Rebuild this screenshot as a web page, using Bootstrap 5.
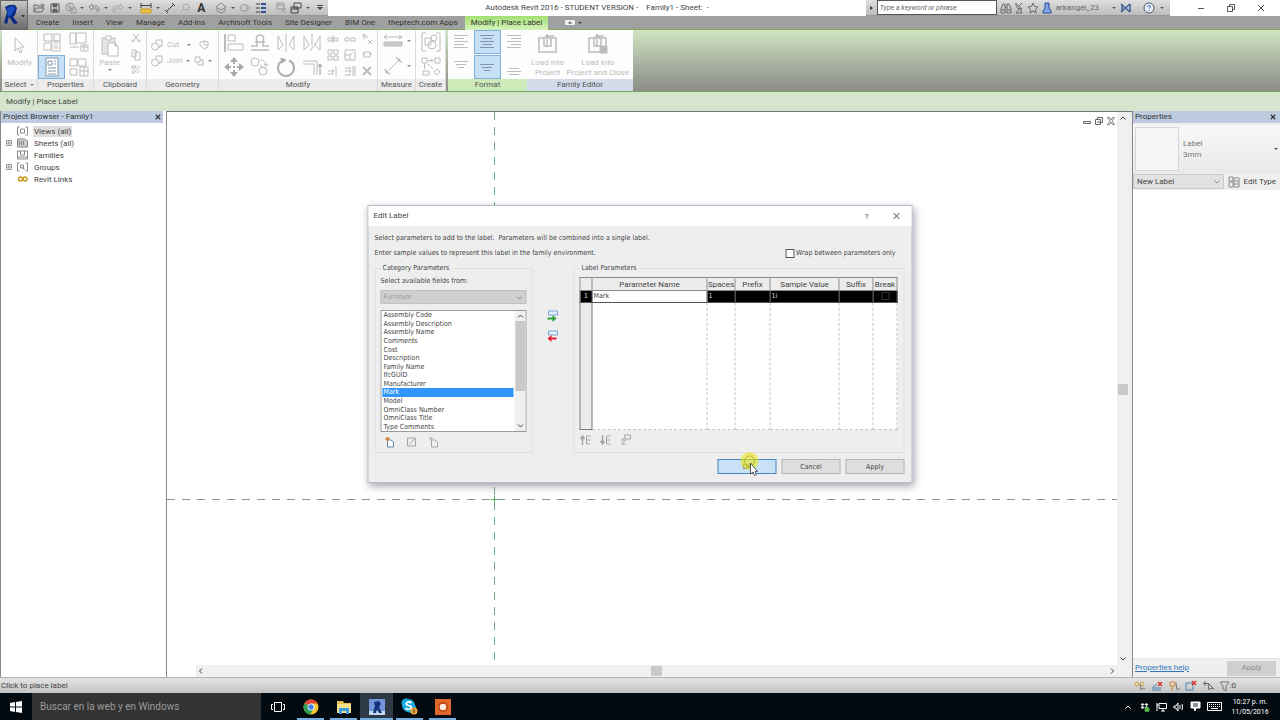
<!DOCTYPE html>
<html lang="en">
<head>
<meta charset="utf-8">
<meta name="viewport" content="width=device-width, initial-scale=1">
<title>Autodesk Revit 2016 - Family1</title>
<link rel="stylesheet" href="https://cdn.jsdelivr.net/npm/bootstrap@5.3.0/dist/css/bootstrap.min.css">
<style>
:root { --ui: Roboto, "Liberation Sans", sans-serif; --dlg: "DejaVu Sans Condensed", "DejaVu Sans", sans-serif; }
body { font: 8px/12px var(--ui); color: #444; background: #fff; overflow: hidden; }
button, input, select { font: inherit; color: inherit; }
button { background: none; border: 0; padding: 0; }
svg { display: block; }
svg:not([fill]) { fill: none; }
svg:not([stroke]) { stroke: currentColor; }
a { color: inherit; text-decoration: none; }

/* title bar */
.app-btn { width: 28px; background: linear-gradient(#c8c8c8, #8a8a8a 60%, #6e6e6e); border: 1px solid #666; }
.titlebar { height: 16px; }
.qat { background: linear-gradient(#dedede, #bdbdbd); border-bottom: 1px solid #999; padding-left: 3px; width: 300px; color: #666; }
.qat button { width: 16px; display: grid; place-items: center; }
.qat .caret, .infobar .caret { width: 8px; }
.qat .txt { font-size: 12px; font-weight: 700; color: #333; }
.caret::after { content: ""; display: block; width: 0; margin: auto; border: 2px solid transparent; border-top-color: #555; border-bottom: 0; }
.sep { width: 4px; }
.infobar { background: linear-gradient(#dedede, #bdbdbd); width: 304px; border-bottom: 1px solid #999; color: #666; }
.infobar input { width: 120px; height: 15px; border: 1px solid #555; background: #fff; font-size: 7px; font-style: italic; padding: 0 2px; border-radius: 0; }
.infobar input::placeholder { color: #666; opacity: 1; }
.winctl button { width: 30px; display: grid; place-items: center; color: #555; }

/* tabs */
.tabs { height: 14px; background: #a0a0a0; color: #333; border-bottom: 1px solid #82a860; padding-left: 2px; gap: 1px; }
.tabs a { padding: 0 6px; line-height: 14px; }
.tabs a.on { background: linear-gradient(#a2e070, #d5f3bd); height: 14px; }

/* ribbon */
.ribbon { height: 62px; background: linear-gradient(#cfe6c1, #a9b1a1 55%, #8b8d87); border-bottom: 1px solid #7f9f7a; color: #bcbcbc; padding: 0 1px 0 2px; }
.ribbon .caret::after { border-top-color: #888; }
.pnl { background: #fdfdfd; border-right: 1px solid #dadada; display: flex; flex-direction: column; }
.pnl > footer { height: 12px; background: #ececec; color: #555; text-align: center; white-space: nowrap; }
.pnl .tools { flex: 1; }
.pnl button { display: grid; place-items: center; color: inherit; }
.pnl .on { background: #c6e0f7; outline: 1px solid #7fb0dc; color: #8296a8; }
.tl { line-height: 10px; white-space: nowrap; }
.g2 { display: grid; align-content: space-around; justify-items: center; }
.sel { width: 36px; } .prp { width: 56px; } .clp { width: 53px; }
.geo { width: 72px; } .mod { width: 159px; } .mea { width: 38px; } .cre { width: 30px; }
.fmt { width: 79px; margin-left: 2px; border: 0; } .fam { width: 106px; border: 0; }
.fmt > footer { background: #cdeab9; } .fam > footer { background: #d3dbea; }
.fmt .g2 { grid-template-columns: repeat(3, 1fr); }
.prp .g2 { grid-template-columns: 1fr 1fr; }
.fmt .g2 button, .prp .g2 button { width: 25px; height: 22px; }
.mod .lg { display: grid; gap: 4px; grid-template-columns: repeat(4, 22px); }
.mod .sm { display: grid; gap: 4px; grid-template-columns: repeat(3, 13px); }

.optbar { height: 19px; background: #d6e5ce; padding: 4px 6px; border-top: 1px solid #c7ecae; }

/* docked panes */
.pane-h { height: 12px; background: #bccbdd; color: #333; padding: 0 2px; }
.browser { width: 167px; border: 1px solid #888; border-width: 0 1px 0 1px; }
.browser .pane-h { margin-right: 3px; }
.tree { padding: 2px 4px; }
.tree li { display: flex; align-items: center; height: 12px; }
.tree .tw { width: 11px; color: #999; }
.tree .ic { width: 13px; color: #888; }
.tree span.hl { background: #dedede; }
.tree span { padding: 0 1px; line-height: 11px; }
.canvas { border-top: 1px solid #777; background: #fff; }
.canvas .draw { position: absolute; inset: 0; }
.sb { background: #f0f0f0; color: #444; }
.sb i { display: block; background: #c9c9c9; }
.vsb { width: 12px; padding: 1px 0 14px; }
.hsb { height: 12px; margin-left: 29px; }
.mdi { position: absolute; right: 2px; top: 5px; gap: 4px; color: #666; }
.edge { width: 3px; background: #eee; }
.props { width: 148px; border-left: 1px solid #888; background: #fff; }
.typebox { height: 50px; background: linear-gradient(#f8f8f8, #e9e9e9); border-top: 2px solid #f0f0f0; padding: 2px; color: #777; line-height: 11px; }
.typebox .thumb { width: 44px; height: 44px; border: 1px solid #d6d6d6; background: #f5f5f5; }
.newlabel { width: 91px; height: 15px; border: 1px solid #c8c8c8; background: #e2e2e2; border-radius: 0; appearance: none; padding: 0 3px; }
.typerow { background: #efefef; height: 17px; }
.p-foot { background: #efefef; height: 19px; border-top: 1px solid #e6e6e6; padding: 0 4px 0 2px; }
.p-foot a { color: #2f77c0; text-decoration: underline; }
.p-foot button { width: 49px; height: 15px; background: #cfcfcf; color: #8e8e8e; }

.status { height: 16px; background: linear-gradient(#e4e4e4, #c3c3c3); border-top: 1px solid #b4b4b4; padding: 0 44px 0 1px; }

/* taskbar */
.task { height: 27px; background: #030a10; color: #fff; }
.task .start { width: 32px; display: grid; place-items: center; }
.task .find { width: 229px; background: #333; border: 0; border-radius: 0; padding: 0 8px; font-size: 10px; }
.task .find::placeholder { color: #9a9a9a; opacity: 1; }
.task .app { width: 33px; display: grid; place-items: center; padding: 0 3px; }
.task .app.run { background: linear-gradient(#76aee2, #76aee2) bottom / 27px 2px no-repeat; }
.task .app.cur { background: linear-gradient(#76aee2, #76aee2) bottom / 100% 2px no-repeat #2d3a45; }
.clock { font-size: 7px; line-height: 10px; width: 44px; text-align: center; margin-right: 8px; }
.tray { gap: 6px; }

/* dialog */
.dlg { position: absolute; top: 205px; left: 50%; transform: translateX(-50%); width: 545px; background: #eee; border: 1px solid #b9b9cc; box-shadow: 1px 3px 8px rgba(0,0,40,.38); font-family: var(--dlg); font-size: 7px; color: #444; }
.dlg header { height: 20px; background: #fff; font: 8px/19px var(--ui); padding: 0 11px 0 5px; }
.dlg main { padding: 6px 7px 8px 6px; }
.line2 { margin-top: 3px; padding-right: 9px; }
.line2 label { gap: 2px; }
.grp { border: 1px solid #e0e0e0; border-radius: 0; padding: 0 5px; margin: 0; }
.grp legend { float: none; width: auto; font-size: 7px; line-height: 10px; padding: 0 2px; margin: 0; }
.cat { width: 158px; }
.cat label { margin-top: 2px; }
.cat .drop { margin-top: 3px; }
.lab { width: 331px; padding-top: 2px; }
.lab legend { margin-bottom: -2px; }
.chk { width: 9px; height: 9px; appearance: none; border: 1px solid #555; background: #fff; margin: 0; border-radius: 0; }
.furn { width: 146px; height: 14px; background: #d0d0d0; border: 1px solid #c2c2c2; color: #999; border-radius: 0; appearance: none; padding: 0 2px; opacity: 1; }
.drop { position: relative; }
.drop svg { position: absolute; right: 3px; top: 4px; pointer-events: none; color: #888; }
.fields { height: 122px; width: 146px; border: 1px solid #999; background: #fff; overflow: hidden; margin-top: 6px; }
.fields .rows { display: flex; flex-direction: column; padding: 0 1px; }
.fields .rows li { flex: 1 1 0; min-height: 0; display: flex; align-items: center; padding: 0 1px; line-height: 8px; }
.fields li.on { background: #3096fa; color: #fff; }
.fields .sb { width: 11px; }
.fields .sb i { width: 10px; height: 70px; }
.params { border-collapse: collapse; width: 317px; table-layout: fixed; background: #fff; height: 153px; line-height: 10px; }
.params th { font: 8px/11px var(--ui); background: #ececec; border: 1px solid #8b8b8b; text-align: center; height: 13px; padding: 0; white-space: nowrap; }
.params td { padding: 0 1px; border: 1px dashed #c4c4c4; vertical-align: top; white-space: nowrap; }
.params tr.cur td { background: #000; color: #ddd; height: 12px; border-color: #555; border-style: solid; }
.params tr.cur td.edit { background: #fff; color: #444; }
.params td.rowh { background: #ececec; border: 1px solid #777; }
.params tr.cur td.rowh { background: #000; text-align: center; padding: 0; }
.params .brk { border-color: #333; background: #000; width: 8px; height: 8px; display: block; margin: 1px auto; }
.movers { padding-top: 47px; margin-left: -2px; }
.ftr { gap: 5px; margin-top: 6px; }
.ftr button { width: 59px; height: 15px; background: #dedede; border: 1px solid #b5b5b5; line-height: 12px; }
.ftr button.ok { background: #c9e1f6; border-color: #4a86c0; }
.ic-row { gap: 8px; color: #a5a5a5; }
.cat .ic-row { gap: 12px; }
.ptr { position: absolute; left: 20px; top: -10px; width: 24px; height: 30px; pointer-events: none; }
</style>
</head>
<body class="vh-100 d-flex flex-column">

<svg width="0" height="0" class="position-absolute" aria-hidden="true">
  <symbol id="chev-d" viewBox="0 0 8 8"><path d="M1.500 2.500 4 5l2.500-2.500" /></symbol>
  <symbol id="chev-u" viewBox="0 0 8 8"><path d="M1.500 5.500 4 3l2.500 2.500" /></symbol>
  <symbol id="x" viewBox="0 0 8 8"><path d="m1 1 6 6M7 1 1 7" /></symbol>
  <symbol id="joinc" viewBox="0 0 12 12"><circle cx="4" cy="7.500" r="3.500"/><path d="M5 4V1h6v6H8M8 9l3-3" /></symbol>
  <symbol id="big" viewBox="0 0 20 20"><path d="M2 2h8v7H2zM12 2h6v7h-6zM2 11h7v7H2zM10 9h8v10h-8zM12 11h4M12 14h4M12 16h4" /></symbol>
</svg>

<div class="d-flex">
  <button class="app-btn d-flex align-items-center justify-content-center" aria-label="Application menu">
    <svg width="26" height="26" viewBox="0 0 26 26" stroke="none"><path fill="#0b2a80" d="M4 5q5-3 10-2l2 3-2 7-2 2 5 6-4 1-5-7-2 7-3-1 3-11z"/><path fill="#1d4fc4" d="m6 6 6-2 2 3-4 6-3 2z"/><path fill="#333" d="M20 13h4l-2 2.500z"/></svg>
  </button>
  <div class="flex-fill">
    <div class="titlebar d-flex justify-content-between">
      <div class="qat d-flex" role="toolbar" aria-label="Quick access">
        <button aria-label="Open"><svg width="12" height="10" viewBox="0 0 12 10"><path d="M1 9V2h3l1 1h4v2M1 9l2-4h8L9 9zM8 1l3 1-1 2"/></svg></button>
        <button aria-label="Save"><svg width="10" height="10" viewBox="0 0 10 10" stroke="#555"><path d="M1 1h8v8H1z" /><path fill="#666" d="M3 1v3h4V1zM3 9V6h4v3z" stroke-width=".6"/></svg></button>
        <button aria-label="Synchronize"><svg width="12" height="12" viewBox="0 0 12 12" stroke="#999"><circle cx="5" cy="5" r="4"/><path d="M5 1v8M2 3l6 5M6 6h5v5H6z"/></svg></button>
        <button class="caret" aria-label="Sync options"></button>
        <button aria-label="Undo"><svg width="12" height="10" viewBox="0 0 12 10" stroke="#888"><path d="M4 1 1 4l3 3V5h4q2 1 1 4 3-1 2-4-1-2-3-2H4z"/></svg></button>
        <button class="caret" aria-label="Undo list"></button>
        <button aria-label="Redo"><svg width="12" height="10" viewBox="0 0 12 10" stroke="#aaa"><path d="m8 1 3 3-3 3V5H4Q2 6 3 9 0 8 1 5q1-2 3-2h4z"/></svg></button>
        <button class="caret" aria-label="Redo list"></button>
        <span class="sep"></span>
        <button aria-label="Measure"><svg width="12" height="12" viewBox="0 0 12 12"><path d="M1 3.500h10M1 1v5M11 1v5" stroke="#444"/><path d="M1 7h10v4H1z" fill="#f0c040" stroke="#c99a2b"/></svg></button>
        <button class="caret" aria-label="Measure options"></button>
        <button aria-label="Dimension"><svg width="12" height="12" viewBox="0 0 12 12" stroke="#333"><path d="m2 10 8-8M1 8l3 3M8 1l3 3"/></svg></button>
        <button aria-label="Tag"><svg width="12" height="10" viewBox="0 0 12 10" stroke="#aaa"><circle cx="7" cy="4" r="3"/><path d="M5 6 2 9M8 7l3-3"/></svg></button>
        <button aria-label="Text" class="txt">A</button>
        <span class="sep"></span>
        <button aria-label="3D view"><svg width="12" height="12" viewBox="0 0 12 12" stroke="#888"><path d="m1 5 5-4 5 4-5 3zM2 6v3l4 2 4-2V6"/></svg></button>
        <button class="caret" aria-label="3D options"></button>
        <button aria-label="Section"><svg width="12" height="12" viewBox="0 0 12 12" stroke="#999"><circle cx="5" cy="6" r="3.500"/><path d="m8 3 3 3-3 3"/></svg></button>
        <button aria-label="Thin lines"><svg width="12" height="12" viewBox="0 0 12 12" stroke="#2b5597"><path d="M1 2h4M1 6h4M1 10h4" stroke="#444"/><path d="M6 2h5M6 6h5M6 10h5" stroke-width="2"/></svg></button>
        <span class="sep"></span>
        <button aria-label="Close hidden windows"><svg width="12" height="12" viewBox="0 0 12 12" stroke="#999"><path d="M2 1h7v6H2zM2 3h7M6 6l5 5M11 6l-5 5"/></svg></button>
        <button aria-label="Switch windows"><svg width="12" height="12" viewBox="0 0 12 12" stroke="#444"><path d="M4 1h7v5H4zM1 5h7v6H1zM1 7h7"/></svg></button>
        <button class="caret" aria-label="Windows list"></button>
        <button class="ms-auto" aria-label="Customize toolbar"><svg width="6" height="6" viewBox="0 0 6 6" stroke="#444"><path d="M0 .5h6"/><path fill="#444" stroke="none" d="M0 2h6L3 5z"/></svg></button>
      </div>
      <div class="d-flex align-items-center"><span class="me-2">Autodesk Revit 2016 - STUDENT VERSION -</span><span>Family1 - Sheet:&nbsp; -</span></div>
      <div class="d-flex">
        <div class="infobar d-flex align-items-center justify-content-between pe-1">
          <button aria-label="Collapse" class="ps-1"><svg width="4" height="6" viewBox="0 0 4 6" stroke="none" fill="#333"><path d="m0 1 3 2-3 2z"/></svg></button>
          <input type="text" aria-label="Search help" placeholder="Type a keyword or phrase">
          <button aria-label="Search"><svg width="12" height="12" viewBox="0 0 12 12"><path d="M1 11V7l2-5h2v9zM7 11V2h2l2 5v4zM5 5h2M1 8h4M7 8h4"/></svg></button>
          <button aria-label="Communication"><svg width="10" height="12" viewBox="0 0 10 12"><path d="m2 2 6 5M2 1q-1 6 6 6M5 4l3-3M5 7l-3 4h6L6 7"/></svg></button>
          <button aria-label="Favorites"><svg width="12" height="12" viewBox="0 0 12 12"><path d="m6 1 1.500 3.500 3.500.5-2.500 2.500.5 3.500-3-2-3 2 .5-3.500L1 5l3.500-.5z"/></svg></button>
          <button class="d-flex align-items-center"><svg class="me-1" width="10" height="12" viewBox="0 0 10 12" stroke="#2b4a9c" fill="#7fa4e0"><path d="M3 1h4v5l2 3v2H1V9l2-3z"/></svg>arkangel_23</button>
          <button class="caret ms-2" aria-label="Account"></button>
          <button aria-label="Exchange apps"><svg width="12" height="10" viewBox="0 0 12 10" stroke="#3d5e9c" stroke-width="1.500"><path d="m1 1 9 8M10 1 1 9M2 1v8M10 1v8"/></svg></button>
          <button class="ms-2" aria-label="Help"><svg width="12" height="12" viewBox="0 0 12 12" fill="#e6eefb" stroke="#556"><circle cx="6" cy="6" r="5"/><path fill="none" stroke="#2757a8" d="M4.500 4.500q1.500-2 3 0 0 1-1.500 2M6 8v1"/></svg></button>
          <button class="caret" aria-label="Help options"></button>
        </div>
        <div class="winctl d-flex ms-3 me-1">
          <button aria-label="Minimize"><svg width="8" height="8" viewBox="0 0 8 8"><path d="M1 4.500h6"/></svg></button>
          <button aria-label="Restore"><svg width="8" height="8" viewBox="0 0 8 8"><path d="M.5 2.500h5v5h-5zM2.500 2V.5h5v5H6"/></svg></button>
          <button aria-label="Close"><svg width="8" height="8"><use href="#x"/></svg></button>
        </div>
      </div>
    </div>
    <nav class="tabs d-flex" aria-label="Ribbon tabs">
      <a href="#">Create</a><a href="#">Insert</a><a href="#">View</a><a href="#">Manage</a><a href="#">Add-Ins</a><a href="#">Archisoft Tools</a><a href="#">Site Designer</a><a href="#">BIM One</a><a href="#">theptech.com Apps</a><a href="#" class="on">Modify | Place Label</a>
      <button class="ms-3" aria-label="Minimize ribbon"><svg width="18" height="6" viewBox="0 0 18 6" stroke="none"><rect width="10" height="5" rx="1" fill="#eee"/><path fill="#444" d="m3 3.500 2-2 2 2zM13 2h4l-2 2z"/></svg></button>
    </nav>
  </div>
</div>

<div class="ribbon d-flex" role="toolbar" aria-label="Ribbon">
  <section class="pnl sel">
    <div class="tools g2 pb-1"><button><svg width="12" height="20" viewBox="0 0 12 20"><path d="M2 1v13l3-3 2 5 2-1-2-5h4z"/></svg><span>Modify</span></button></div>
    <footer class="d-flex align-items-center justify-content-center gap-1">Select <span class="caret"></span></footer>
  </section>
  <section class="pnl prp">
    <div class="tools g2">
      <button aria-label="Family types"><svg width="20" height="20"><use href="#big"/></svg></button>
      <button aria-label="Family category"><svg width="20" height="20" viewBox="0 0 20 20"><path d="M1 1h6v11H1zM7 1h10v10H7zM1 15h9M12 13h7v6h-7zM12 15h7M15 13v6"/></svg></button>
      <button class="on" aria-label="Properties"><svg width="20" height="20" viewBox="0 0 20 20"><path fill="#fff" d="M4 1h12v18H4z"/><path d="M6 4h4v4H6zM12 4h2M12 7h2M6 11h8M6 14h8M6 17h8"/></svg></button>
      <button aria-label="Type properties"><svg width="20" height="20" viewBox="0 0 20 20"><path d="M1 2h7v7H1zM9 2h8v7H9zM1 12h7v6H1zM11 10h8v9h-8zM11 14h8M15 10v9"/></svg></button>
    </div>
    <footer>Properties</footer>
  </section>
  <section class="pnl clp">
    <div class="tools d-flex justify-content-around align-items-center">
      <button><svg width="20" height="22" viewBox="0 0 20 22"><path fill="#e4e4e4" d="M2 3h13v16H2z"/><path fill="#fff" d="M6 1h5v4H6zM8 8h7l3 3v10H8zM15 8v3h3"/></svg><span>Paste</span><span class="caret pb-1"></span></button>
      <div class="d-grid gap-1">
        <button aria-label="Cut to clipboard"><svg width="10" height="12" viewBox="0 0 10 12"><path d="m2 1 5 6M8 1 3 7"/><circle cx="2" cy="8" r="1"/><circle cx="8" cy="8" r="1"/></svg></button>
        <button aria-label="Copy to clipboard"><svg width="10" height="12" viewBox="0 0 10 12"><path d="M1 1h4v7H1zM4 3h4l1 1v7H4z"/></svg></button>
        <button aria-label="Match type"><svg width="10" height="12" viewBox="0 0 10 12"><path d="M1 1h4v2H1zM9 1 5 6 2 9l-1-2 3-2M6 8l3-2"/></svg></button>
      </div>
    </div>
    <footer>Clipboard</footer>
  </section>
  <section class="pnl geo">
    <div class="tools d-grid align-content-center ps-1 pb-1 gap-1">
      <div class="d-flex align-items-center gap-1"><svg width="12" height="12"><use href="#joinc"/></svg><button>Cut</button><span class="caret ms-1 me-1"></span><button aria-label="Cope"><svg width="10" height="10" viewBox="0 0 10 10"><path d="M1 2 5 1l4 1v5L5 9 1 5zM5 1v4h4"/></svg></button></div>
      <div class="d-flex align-items-center gap-1"><svg width="12" height="12"><use href="#joinc"/></svg><button>Join</button><span class="caret"></span><button aria-label="Split face"><svg width="10" height="10" viewBox="0 0 10 10"><path d="M1 1h5v5H1zM6 4h3v5H4V6"/></svg></button><span class="caret"></span></div>
    </div>
    <footer>Geometry</footer>
  </section>
  <section class="pnl mod">
    <div class="tools d-flex align-items-center px-1 justify-content-between">
      <div class="lg">
        <button aria-label="Align"><svg width="20" height="20" viewBox="0 0 20 20"><path d="M1 1v18" stroke-width="2"/><path d="M4 2h7v6H4zM4 11h15v6H4z"/></svg></button>
        <button aria-label="Offset"><svg width="20" height="20" viewBox="0 0 20 20"><path d="M1 13h6V9Q5 2 10 2t3 7v4h6M1 17h18M5 9h10" stroke-width="1.500"/></svg></button>
        <button aria-label="Mirror pick axis"><svg width="20" height="20" viewBox="0 0 20 20"><path d="M10 1v18M2 3v14l5-5zM18 3v14l-5-5z"/></svg></button>
        <button aria-label="Mirror draw axis"><svg width="20" height="20" viewBox="0 0 20 20"><path d="M10 1v11M2 3v14l5-5zM18 3v14l-5-5zM8 18l6-8"/></svg></button>
        <button aria-label="Move"><svg width="20" height="20" viewBox="0 0 20 20" fill="#aaa" stroke="#aaa"><path stroke="none" d="m10 0 4 5H6zM10 20l4-5H6zM0 10l5 4V6zM20 10l-5 4V6zM9 9h2v2H9z"/><path d="M10 4v3M10 13v3M4 10h3M13 10h3" stroke-width="2"/></svg></button>
        <button aria-label="Copy"><svg width="20" height="20" viewBox="0 0 20 20"><circle cx="5" cy="5" r="4"/><circle cx="13" cy="14" r="4"/><path d="M10 3q6 0 6 5m-2-1 2 2 2-2M10 8l6 4"/></svg></button>
        <button aria-label="Rotate"><svg width="20" height="20" viewBox="0 0 20 20" stroke="#b0b0b0"><path stroke-width="2" d="M13 3.500A8 8 0 1 1 7 3.500"/><path d="m5 1 5 2-4 3z" fill="#aaa"/></svg></button>
        <button aria-label="Trim"><svg width="20" height="20" viewBox="0 0 20 20"><path d="M1 4h14v14M1 7h11v11" /><path d="M18 18V7m-2 3 2-3 2 3" stroke="#999"/></svg></button>
      </div>
      <div class="sm">
        <button aria-label="Split"><svg width="12" height="12" viewBox="0 0 12 12"><path d="M1 5h4v3H1zM7 5h4v3H7zM6 2v8"/></svg></button>
        <button aria-label="Split with gap"><svg width="12" height="12" viewBox="0 0 12 12"><path d="M1 5h4v3H1zM7 5h4v3H7z"/></svg></button>
        <button aria-label="Unpin"><svg width="12" height="12" viewBox="0 0 12 12"><path d="M1 2h4M3 1v5M3 4h4M7 7l4 4M11 7l-4 4"/></svg></button>
        <button aria-label="Array"><svg width="12" height="12" viewBox="0 0 12 12"><path d="M1 1h4v4H1zM7 1h4v4H7zM1 7h4v4H1zM7 7h4v4H7z"/></svg></button>
        <button aria-label="Scale"><svg width="12" height="12" viewBox="0 0 12 12"><path d="M1 1h10v10H1zM1 6h5v5M6 6l3-3"/></svg></button>
        <button aria-label="Pin"><svg width="12" height="12" viewBox="0 0 12 12"><path d="M3 3h6v5H3zM1 5h2M9 5h2"/></svg></button>
        <button aria-label="Trim single"><svg width="12" height="12" viewBox="0 0 12 12"><path d="M1 6h6m-2-2 2 2-2 2M9 1v10M1 9h6"/></svg></button>
        <button aria-label="Trim multiple"><svg width="12" height="12" viewBox="0 0 12 12"><path d="M1 3h6M1 6h6m-2-2 2 2-2 2M9 1v10M11 1v10M1 10h6"/></svg></button>
        <button aria-label="Delete"><svg width="12" height="12" viewBox="0 0 12 12" stroke-width="2"><path d="m2 2 8 8M10 2l-8 8"/></svg></button>
      </div>
    </div>
    <footer>Modify</footer>
  </section>
  <section class="pnl mea">
    <div class="tools d-grid align-content-around justify-content-center">
      <div class="d-flex align-items-center gap-1"><button aria-label="Measure distance"><svg width="20" height="16" viewBox="0 0 20 16"><path d="M1 4h18M4 2 1 4l3 2M16 2l3 2-3 2"/><path d="M1 9h18v4H1z" fill="#ccc"/></svg></button><span class="caret"></span></div>
      <div class="d-flex align-items-center gap-1"><button aria-label="Aligned dimension"><svg width="20" height="20" viewBox="0 0 20 20"><path d="M3 17 17 3M1 13l6 6M13 1l6 6M3 13v4h4M13 3h4v4"/></svg></button><span class="caret"></span></div>
    </div>
    <footer>Measure</footer>
  </section>
  <section class="pnl cre">
    <div class="tools g2">
      <button aria-label="Create group"><svg width="20" height="20" viewBox="0 0 20 20"><path d="M5 1H1v18h4M15 1h4v18h-4"/><path d="M4 6h6v7H4z"/><circle cx="13" cy="6" r="3"/><circle cx="11" cy="13" r="4"/></svg></button>
      <button aria-label="Create similar"><svg width="20" height="20" viewBox="0 0 20 20"><path d="M1 1h5v5H1zM14 1h5v5h-5zM2 14h6v4H2zM16 12l3 3-3 3-3-3zM7 3.500h5m-2-2 2 2-2 2M3.500 7v5M7 7l5 5"/></svg></button>
    </div>
    <footer>Create</footer>
  </section>
  <section class="pnl fmt">
    <div class="tools g2">
      <button aria-label="Left"><svg width="16" height="16" viewBox="0 0 16 16"><path d="M1 1.500h14M1 4.500h10M1 7.500h14M1 10.500h10M1 13.500h14"/></svg></button>
      <button class="on" aria-label="Center"><svg width="16" height="16" viewBox="0 0 16 16"><path d="M1 1.500h14M3 4.500h10M1 7.500h14M3 10.500h10M1 13.500h14"/></svg></button>
      <button aria-label="Right"><svg width="16" height="16" viewBox="0 0 16 16"><path d="M1 1.500h14M5 4.500h10M1 7.500h14M5 10.500h10M1 13.500h14"/></svg></button>
      <button aria-label="Top"><svg width="16" height="16" viewBox="0 0 16 16"><path d="M1 2.500h14M3 5.500h10M5 8.500h6"/></svg></button>
      <button class="on" aria-label="Middle"><svg width="16" height="16" viewBox="0 0 16 16"><path d="M1 5.500h14M3 8.500h10M5 11.500h6"/></svg></button>
      <button aria-label="Bottom"><svg width="16" height="16" viewBox="0 0 16 16"><path d="M3 9.500h10M1 12.500h14M3 15.500h10"/></svg></button>
    </div>
    <footer>Format</footer>
  </section>
  <section class="pnl fam">
    <div class="tools d-flex justify-content-between px-1 align-items-start pt-1">
      <button class="tl"><svg class="mb-1" width="20" height="20" viewBox="0 0 20 20"><path stroke-width="1.500" d="M1 4v14h17V4h-5v8H6V4zM9 13V2h7M6 5l3-4 3 4"/></svg>Load into<br>Project</button>
      <button class="tl"><svg class="mb-1" width="20" height="20" viewBox="0 0 20 20"><path stroke-width="1.500" d="M1 4v14h17V4h-5v8H6V4zM9 13V2h7M6 5l3-4 3 4"/><path fill="#bbb" d="M12 12h7v7h-7z"/></svg>Load into<br>Project and Close</button>
    </div>
    <footer>Family Editor</footer>
  </section>
</div>
<div class="optbar d-flex align-items-center">Modify | Place Label</div>

<div class="flex-fill d-flex" style="min-height:0">
  <aside class="browser">
    <div class="pane-h d-flex justify-content-between align-items-center">Project Browser - Family1<button aria-label="Close browser"><svg width="6" height="6" stroke-width="1.500"><use href="#x"/></svg></button></div>
    <ul class="tree list-unstyled m-0">
      <li><span class="tw"></span><svg class="ic" height="10" viewBox="0 0 12 10"><path d="M3 1H1v8h2M9 1h2v8H9M4 3h4v4H4z"/></svg><span class="hl ms-1">Views (all)</span></li>
      <li><span class="tw"><svg width="6" height="6" viewBox="0 0 6 6"><path d="M.5.5h5v5h-5zM1 3h4M3 1v4"/></svg></span><svg class="ic" height="10" viewBox="0 0 12 10"><path d="M1 1h7l3 2v6H1zM3 3v4M5 3v4M7 3v4" fill="#ccc"/></svg><span class="ms-1">Sheets (all)</span></li>
      <li><span class="tw"></span><svg class="ic" height="10" viewBox="0 0 12 10"><path d="M1 1h10v8H1zM4 1v4h4V1M1 7h10"/></svg><span class="ms-1">Families</span></li>
      <li><span class="tw"><svg width="6" height="6" viewBox="0 0 6 6"><path d="M.5.5h5v5h-5zM1 3h4M3 1v4"/></svg></span><svg class="ic" height="10" viewBox="0 0 12 10"><path d="M3 1H1v8h2M9 1h2v8H9M4 3h3v3H4zM6 5l2 3"/></svg><span class="ms-1">Groups</span></li>
      <li><span class="tw"></span><svg class="ic" height="10" viewBox="0 0 12 10" stroke="#c79a1c" stroke-width="1.500"><circle cx="4" cy="5" r="2"/><circle cx="8.500" cy="5" r="2"/></svg><span class="ms-1">Revit Links</span></li>
    </ul>
  </aside>

  <div class="canvas flex-fill d-flex">
    <div class="flex-fill d-flex flex-column">
      <div class="flex-fill position-relative">
        <svg class="draw" width="100%" height="100%">
          <line x1="327.500" y1="0" x2="327.500" y2="100%" stroke="#6fae84" stroke-dasharray="8 7"/>
          <line x1="0" y1="387.500" x2="100%" y2="387.500" stroke="#859c8b" stroke-dasharray="8 7"/>
          <path d="M324 387.500h7M327.500 384v7" stroke="#4faf5a"/>
        </svg>
        <div class="mdi d-flex">
          <button aria-label="Minimize view"><svg width="8" height="8" viewBox="0 0 8 8"><path d="M.5 4.500h7v2h-7z"/></svg></button>
          <button aria-label="Restore view"><svg width="8" height="8" viewBox="0 0 8 8"><path d="M.5 2.500h5v5h-5zM2.500 2V.5h5v5H6M2 5h3"/></svg></button>
          <button aria-label="Close view"><svg width="8" height="8" viewBox="0 0 8 8"><path d="M.5.5h2L4 3 5.500.5h2L5 4l2.500 3.500h-2L4 5 2.500 7.500h-2L3 4z" stroke-width=".8"/></svg></button>
        </div>
      </div>
      <div class="sb hsb d-flex align-items-center justify-content-between">
        <svg width="10" height="8" viewBox="0 0 8 8"><path d="M5 1.500 2.500 4 5 6.500"/></svg><i style="width:11px;height:10px"></i><svg width="10" height="8" viewBox="0 0 8 8"><path d="M3 1.500 5.500 4 3 6.500"/></svg>
      </div>
    </div>
    <div class="sb vsb d-flex flex-column align-items-center justify-content-between">
      <svg width="8" height="10"><use href="#chev-u"/></svg><i style="width:10px;height:11px"></i><svg width="8" height="8"><use href="#chev-d"/></svg>
    </div>
    <div class="edge"></div>
  </div>

  <aside class="props d-flex flex-column">
    <div class="pane-h d-flex justify-content-between align-items-center pe-1">Properties<button aria-label="Close properties"><svg width="6" height="6" stroke-width="1.500"><use href="#x"/></svg></button></div>
    <div class="typebox d-flex align-items-center"><div class="thumb me-1"></div><div class="flex-fill">Label<br>3mm</div><button class="caret" aria-label="Choose type"></button></div>
    <div class="typerow d-flex align-items-center justify-content-between pe-1">
      <div class="drop"><select class="newlabel" aria-label="Instance filter"><option>New Label</option></select><svg width="8" height="8"><use href="#chev-d"/></svg></div>
      <button class="d-flex align-items-center gap-1"><svg width="12" height="12" viewBox="0 0 12 12" stroke="#888"><path d="M1 1h4v4H1zM1 6h4v5H1zM6 2h5v9H6zM6 5h5M6 8h5"/></svg>Edit Type</button>
    </div>
    <div class="flex-fill"></div>
    <div class="p-foot d-flex align-items-center justify-content-between"><a href="#">Properties help</a><button disabled>Apply</button></div>
  </aside>
</div>

<footer class="status d-flex justify-content-between align-items-center">
  <span>Click to place label</span>
  <div class="d-flex align-items-center gap-1">
    <svg width="13" height="12" viewBox="0 0 13 12" stroke="#d0a430"><circle cx="3" cy="4" r="2"/><circle cx="8" cy="4" r="2"/><path stroke="#777" d="m6 4 1 6 2-2 2 1"/></svg>
    <svg width="13" height="12" viewBox="0 0 13 12" stroke="#4d86ba"><path d="M1 8h9M2 7l4-3M1 10h9"/><path stroke="#d33" stroke-width="1.500" d="m7 2 4 4M11 2 7 6"/></svg>
    <svg width="13" height="12" viewBox="0 0 13 12" stroke="#d58a3a"><path d="M2 2h5v4H2zM4 6v5"/><path stroke="#777" d="m8 3 1 7 3-2"/></svg>
    <svg width="13" height="12" viewBox="0 0 13 12" stroke="#4d86ba"><path d="M1 3h7v7H1z"/><path stroke="#d33" stroke-width="1.500" d="m7 1 4 4M11 1 7 5"/></svg>
    <svg width="13" height="12" viewBox="0 0 13 12" stroke="#666"><path d="M3 1v5M1 3.500h5M6 3l1 7 2-2 3 1z"/></svg>
    <span class="d-flex align-items-center"><svg width="11" height="12" viewBox="0 0 11 12" stroke="#777"><path d="M1 2h9L7 6v5L4 9V6z"/></svg>:0</span>
  </div>
</footer>

<div class="task d-flex">
  <button class="start" aria-label="Start"><svg width="12" height="12" viewBox="0 0 12 12" stroke="none" fill="#fff"><path d="m0 2 5-1v4.500H0zM6 1l6-1v5.500H6zM0 6.500h5V11l-5-1zM6 6.500h6V12l-6-1z"/></svg></button>
  <input class="find" type="text" aria-label="Buscar" placeholder="Buscar en la web y en Windows">
  <button class="app" aria-label="Task view"><svg width="14" height="10" viewBox="0 0 14 10"><path d="M3.500.5h7v9h-7zM2 2.500H.5v5H2M12 2.500h1.500v5H12"/></svg></button>
  <button class="app run" aria-label="Chrome"><svg width="16" height="16" viewBox="0 0 16 16" stroke="none"><circle cx="8" cy="8" r="7.500" fill="#f7c52d"/><path fill="#df4436" d="M8 8 1.500 4.200A7.500 7.500 0 0 1 14.500 4.500H8z"/><path fill="#2a9e52" d="M8 8 1.500 4.200A7.500 7.500 0 0 0 7 15.400L11 9.500z"/><circle cx="8" cy="8" r="3.500" fill="#fff"/><circle cx="8" cy="8" r="2.700" fill="#4285e8"/></svg></button>
  <button class="app run" aria-label="Explorer"><svg width="16" height="14" viewBox="0 0 16 14" stroke="none"><path fill="#e8c04e" d="M1 1h6l1 2h7v10H1z"/><path fill="#f9e08a" d="M1 4h14v9H1z"/><path fill="#3f9fdc" d="M3 8h10v6h-3v-3H6v3H3z"/></svg></button>
  <button class="app cur" aria-label="Revit"><svg width="16" height="16" viewBox="0 0 16 16" stroke="none"><path fill="#7195d6" d="M0 0h16v16H0z"/><path fill="#c5d6f0" d="M0 12h16v4H0z"/><path fill="#15337c" d="m5 3 5-1 2 3-2 3 3 6h-3L8 10l-1 4H4l2-7z"/></svg></button>
  <button class="app run" aria-label="Skype"><svg width="17" height="17" viewBox="0 0 17 17" stroke="none"><circle cx="5" cy="5" r="4.500" fill="#19a8e4"/><circle cx="10" cy="10" r="5" fill="#19a8e4"/><circle cx="7.500" cy="7.500" r="6.500" fill="#19a8e4"/><path fill="none" stroke="#fff" stroke-width="1.800" d="M10.500 5Q9 3.500 6.500 4.200 4 5.500 6 7l3 1q3 1.500 0 3-3 1-4.500-1"/><circle cx="13" cy="13" r="3.500" fill="#f2a93b"/><path stroke="#422" d="M13 11v4"/></svg></button>
  <button class="app run" aria-label="Recorder"><svg width="16" height="16" viewBox="0 0 16 16" stroke="none"><path fill="#e0682a" d="M0 0h16v16H0z"/><circle cx="8" cy="8" r="5" fill="#b94712"/><circle cx="8" cy="8" r="3.300" fill="#ffe9d8"/></svg></button>
  <div class="tray d-flex align-items-center ms-auto">
    <svg width="10" height="8"><use href="#chev-u"/></svg>
    <svg width="11" height="10" viewBox="0 0 10 10" stroke="none" fill="#eee"><path d="m3 1 2 1.500L3 4 1 2.500zM7 1l2 1.500L7 4 5 2.500zM3 4l2 1.500L3 7 1 5.500zM7 4l2 1.500L7 7 5 5.500z"/><circle cx="7.500" cy="7.500" r="2.500" fill="#4fb84a"/></svg>
    <svg width="11" height="10" viewBox="0 0 11 10"><path d="M3 1.500h7.500v5H3zM1 1v8M5 9h4M.5 3h2M7 7v2"/></svg>
    <svg width="11" height="10" viewBox="0 0 11 10"><path d="M1 4h2l2-3v8L3 6H1zM7 3v4M9 2q1 3 0 6"/></svg>
    <svg width="11" height="11" viewBox="0 0 11 11"><path fill="#fff" d="M1 1h9v6H6L5 10 4 7H1z"/><path stroke="#123" d="M3 3h5M3 5h5"/></svg>
    <svg width="15" height="9" viewBox="0 0 15 9"><path d="M.5.5h14v8H.5z"/><path stroke-dasharray="1 1" d="M2 2.500h11M2 4.500h11"/><path d="M4 6.500h7"/></svg>
    <div class="clock">10:27 p. m.<br>11/05/2016</div>
  </div>
</div>

<div class="dlg" role="dialog" aria-label="Edit Label">
  <header class="d-flex justify-content-between">Edit Label
    <div class="d-flex align-items-center gap-4"><button aria-label="Help">?</button><button aria-label="Close"><svg width="8" height="8"><use href="#x"/></svg></button></div>
  </header>
  <main>
    <div>Select parameters to add to the label.&nbsp; Parameters will be combined into a single label.</div>
    <div class="line2 d-flex justify-content-between align-items-center"><span>Enter sample values to represent this label in the family environment.</span>
      <label class="d-flex align-items-center"><input type="checkbox" class="chk">Wrap between parameters only</label></div>
    <div class="d-flex justify-content-between mt-1">
      <fieldset class="grp cat">
        <legend>Category Parameters</legend>
        <label for="furn" class="d-block">Select available fields from:</label>
        <div class="drop"><select id="furn" class="furn" disabled><option>Furniture</option></select><svg width="8" height="8"><use href="#chev-d"/></svg></div>
        <div class="fields d-flex">
          <ul class="rows list-unstyled m-0 flex-fill" role="listbox" aria-label="Available fields">
            <li role="option">Assembly Code</li><li role="option">Assembly Description</li><li role="option">Assembly Name</li><li role="option">Comments</li><li role="option">Cost</li><li role="option">Description</li><li role="option">Family Name</li><li role="option">IfcGUID</li><li role="option">Manufacturer</li><li role="option" class="on" aria-selected="true">Mark</li><li role="option">Model</li><li role="option">OmniClass Number</li><li role="option">OmniClass Title</li><li role="option">Type Comments</li>
          </ul>
          <div class="sb d-flex flex-column align-items-center"><svg width="8" height="10"><use href="#chev-u"/></svg><i></i><svg class="mt-auto" width="8" height="10"><use href="#chev-d"/></svg></div>
        </div>
        <div class="ic-row d-flex mt-1 mb-1 ps-1">
          <button aria-label="Add parameter"><svg width="10" height="12" viewBox="0 0 10 12" stroke="#5d88a8"><path fill="#fff" d="M3 4h3l3 2v5H3z"/><path stroke="#d08a3a" stroke-width="2" d="M1 3h4M3 1v4"/></svg></button>
          <button aria-label="Edit parameter"><svg width="10" height="12" viewBox="0 0 10 12"><path d="M1 2h8v8H1zM3 8l5-5"/></svg></button>
          <button aria-label="Delete parameter"><svg width="10" height="12" viewBox="0 0 10 12"><path d="M3 4h3l3 2v5H3zM1 1l3 3M4 1 1 4"/></svg></button>
        </div>
      </fieldset>
      <div class="movers d-grid align-content-start gap-2">
        <button aria-label="Add to label"><svg width="12" height="12" viewBox="0 0 12 12"><path stroke="#7aa7d8" fill="#e3f0fc" d="M2 1h9v4H2z"/><path stroke="#2f9e3f" stroke-width="2" d="M1 8.500h6"/><path fill="#2f9e3f" stroke="none" d="m6 5 4 3.500L6 12z"/></svg></button>
        <button aria-label="Remove from label"><svg width="12" height="12" viewBox="0 0 12 12"><path stroke="#7aa7d8" fill="#e3f0fc" d="M2 1h9v4H2z"/><path stroke="#e0202a" stroke-width="2" d="M4 8.500h6"/><path fill="#e0202a" stroke="none" d="M5 5 1 8.500 5 12z"/></svg></button>
      </div>
      <fieldset class="grp lab">
        <legend>Label Parameters</legend>
        <table class="params mt-1">
          <colgroup><col style="width:12px"><col style="width:115px"><col style="width:28px"><col style="width:35px"><col style="width:69px"><col style="width:34px"><col style="width:24px"></colgroup>
          <thead><tr><th></th><th>Parameter Name</th><th>Spaces</th><th>Prefix</th><th>Sample Value</th><th>Suffix</th><th>Break</th></tr></thead>
          <tbody>
            <tr class="cur"><td class="rowh">1</td><td class="edit">Mark</td><td>1</td><td></td><td>1i</td><td></td><td><input type="checkbox" class="chk brk" aria-label="Break"></td></tr>
            <tr><td class="rowh"></td><td></td><td></td><td></td><td></td><td></td><td></td></tr>
          </tbody>
        </table>
        <div class="ic-row d-flex mt-1 mb-1">
          <button aria-label="Move up"><svg width="12" height="12" viewBox="0 0 12 12"><path stroke-width="1.500" d="M3 11V2M1 5l2-3 2 3"/><path d="M11 2H7v8h4M7 6h4"/></svg></button>
          <button aria-label="Move down"><svg width="12" height="12" viewBox="0 0 12 12"><path stroke-width="1.500" d="M3 1v9M1 7l2 3 2-3"/><path d="M11 2H7v8h4M7 6h4"/></svg></button>
          <button aria-label="Edit format"><svg width="12" height="12" viewBox="0 0 12 12"><path d="M5 1h6v4H6zM5 4 2 6h4l-4 4h4"/></svg></button>
        </div>
      </fieldset>
    </div>
    <div class="ftr d-flex justify-content-end">
      <div class="position-relative"><button class="ok">OK</button>
        <svg class="ptr" viewBox="0 0 24 30" stroke="none"><circle cx="12" cy="12" r="9" fill="#e6e614" fill-opacity=".6"/><circle cx="12" cy="12" r="5" fill="none" stroke="#b5a61c" stroke-opacity=".7"/><path fill="#fff" stroke="#333" stroke-width=".8" d="M13 14v11l2.500-2 1.500 3.500 2-1-1.500-3H20z"/></svg></div>
      <button>Cancel</button><button>Apply</button>
    </div>
  </main>
</div>
<script src="https://cdn.jsdelivr.net/npm/bootstrap@5.3.0/dist/js/bootstrap.bundle.min.js"></script>
</body>
</html>
